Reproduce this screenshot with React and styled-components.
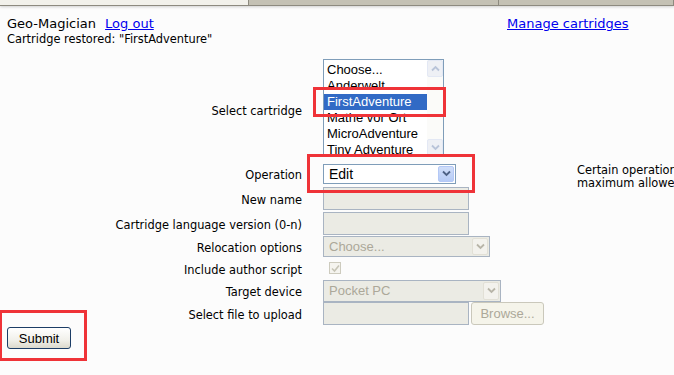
import React from "react";
import styled, { createGlobalStyle } from "styled-components";

const GlobalStyle = createGlobalStyle`
  html, body {
    margin: 0;
    padding: 0;
    background: #fcfcfc;
    overflow: hidden;
  }
  body {
    font-family: "DejaVu Sans", Verdana, sans-serif;
    color: #000;
  }
`;

const cartridges = [
  "Choose...",
  "Anderwelt",
  "FirstAdventure",
  "Mathe vor Ort",
  "MicroAdventure",
  "Tiny Adventure",
];

const Chevron = ({ color, dir = "down" }) => (
  <svg width="9" height="7" viewBox="0 0 9 7">
    <path
      d={dir === "down" ? "M1 1.5 L4.5 5 L8 1.5" : "M1 5.5 L4.5 2 L8 5.5"}
      fill="none"
      stroke={color}
      strokeWidth="1.8"
    />
  </svg>
);

const CheckMark = () => (
  <svg width="9" height="9" viewBox="0 0 9 9">
    <path d="M1 4.5 L3.5 7 L8 1.5" fill="none" stroke="#c6c4b6" strokeWidth="1.6" />
  </svg>
);

const App = () => {
  return (
    <Page>
      <GlobalStyle />
      <TabStrip>
        <Tab $active />
        <Tab $width={249} />
        <Tab />
      </TabStrip>

      <Header>
        <TopLine>
          <span>
            Geo-Magician <HeadLink href="#">Log out</HeadLink>
          </span>
          <HeadLink href="#">Manage cartridges</HeadLink>
        </TopLine>
        <Status>Cartridge restored: "FirstAdventure"</Status>
      </Header>

      <Form>
        <Label>Select cartridge</Label>
        <ListBox>
          <Options>
            {cartridges.map((c) => (
              <Option key={c} $selected={c === "FirstAdventure"}>
                {c}
              </Option>
            ))}
          </Options>
          <ScrollBar>
            <ScrollButton>
              <Chevron color="#b9c4d9" dir="up" />
            </ScrollButton>
            <ScrollButton>
              <Chevron color="#b9c4d9" />
            </ScrollButton>
          </ScrollBar>
        </ListBox>

        <Label>Operation</Label>
        <Select $width={133} $height={20}>
          <SelectText $size={14}>Edit</SelectText>
          <DropButton>
            <Chevron color="#4d6185" />
          </DropButton>
        </Select>
        <Note>
          Certain operations may exceed the
          <br />
          maximum allowed size
        </Note>

        <Label>New name</Label>
        <TextInput $width={146} disabled />

        <Label>Cartridge language version (0-n)</Label>
        <TextInput $width={146} disabled />

        <Label>Relocation options</Label>
        <Select $width={167} $height={21} $disabled>
          <SelectText $disabled>Choose...</SelectText>
          <DropButton $disabled>
            <Chevron color="#b8b5a8" />
          </DropButton>
        </Select>

        <Label>Include author script</Label>
        <CheckBox>
          <CheckMark />
        </CheckBox>

        <Label>Target device</Label>
        <Select $width={178} $height={22} $disabled>
          <SelectText $disabled>Pocket PC</SelectText>
          <DropButton $disabled>
            <Chevron color="#b8b5a8" />
          </DropButton>
        </Select>

        <Label>Select file to upload</Label>
        <FileRow>
          <TextInput $width={146} disabled />
          <Button disabled>Browse...</Button>
        </FileRow>
      </Form>

      <SubmitRow>
        <SubmitButton>Submit</SubmitButton>
      </SubmitRow>

      <Highlight style={{ left: 313, top: 87, width: 133, height: 30 }} />
      <Highlight style={{ left: 307, top: 154, width: 168, height: 39 }} />
      <Highlight style={{ left: -1, top: 310, width: 88, height: 51 }} />
    </Page>
  );
};

export default App;

const Page = styled.div`
  position: relative;
  width: 674px;
  height: 375px;
  overflow: hidden;
`;

const TabStrip = styled.div`
  display: flex;
  height: 5px;
  border-bottom: 1px solid #8d8a7f;
  box-shadow: 0 1px 3px rgba(0, 0, 0, 0.18);
`;

const Tab = styled.div`
  width: ${(p) => (p.$width ? `${p.$width}px` : p.$active ? "248px" : "auto")};
  flex: ${(p) => (p.$width || p.$active ? "none" : "1")};
  background: ${(p) => (p.$active ? "#f2f1eb" : "#c4c1b4")};
  border-right: 1px solid #8d8a7f;
`;

const Header = styled.div`
  padding: 10px 0 0 7px;
`;

const TopLine = styled.div`
  display: grid;
  grid-template-columns: 495px auto;
  font-size: 13px;
  line-height: 15px;
`;

const HeadLink = styled.a`
  color: #0000ee;
  text-decoration: underline;
  margin-left: 5px;
`;

const Status = styled.div`
  margin-top: 1px;
  font-size: 11.4px;
  line-height: 14px;
`;

const Form = styled.div`
  display: grid;
  margin-top: 12px;
  grid-template-columns: 302px 233px auto;
  column-gap: 21px;
  grid-template-rows: 103px 25px 25px 24px 22px 22px 23px 22px;
  align-items: center;
  font-size: 11.4px;
  white-space: nowrap;
`;

const Label = styled.div`
  grid-column: 1;
  justify-self: end;
  padding-top: 3px;
`;

const ListBox = styled.div`
  align-self: start;
  margin-top: 1px;
  width: 121px;
  height: 98px;
  box-sizing: border-box;
  border: 1px solid #7f9db9;
  background: #fff;
  display: flex;
`;

const Options = styled.div`
  flex: 1;
  padding-top: 2px;
  font-family: "Liberation Sans", Arial, sans-serif;
  font-size: 13px;
  line-height: 16px;
  overflow: hidden;
`;

const Option = styled.div`
  padding-left: 3px;
  background: ${(p) => (p.$selected ? "#316ac5" : "transparent")};
  color: ${(p) => (p.$selected ? "#fff" : "#000")};
`;

const ScrollBar = styled.div`
  width: 16px;
  display: flex;
  flex-direction: column;
  justify-content: space-between;
  background: #fbfbf9;
`;

const ScrollButton = styled.div`
  height: 17px;
  box-sizing: border-box;
  border: 1px solid #e3e8f4;
  border-radius: 2px;
  background: #eef0f5;
  display: flex;
  align-items: center;
  justify-content: center;
`;

const Select = styled.div`
  width: ${(p) => p.$width}px;
  height: ${(p) => p.$height}px;
  box-sizing: border-box;
  border: 1px solid ${(p) => (p.$disabled ? "#a9b4c2" : "#7f9db9")};
  background: ${(p) => (p.$disabled ? "#ebebe4" : "#fff")};
  display: flex;
  align-items: center;
  justify-content: space-between;
  padding: 1px;
  font-family: "Liberation Sans", Arial, sans-serif;
`;

const SelectText = styled.span`
  padding-left: 4px;
  font-size: ${(p) => p.$size || 13}px;
  color: ${(p) => (p.$disabled ? "#aca899" : "#000")};
`;

const DropButton = styled.div`
  width: 16px;
  height: 100%;
  box-sizing: border-box;
  border: 1px solid ${(p) => (p.$disabled ? "#e2e0d6" : "#b4c8f6")};
  border-radius: 2px;
  background: ${(p) =>
    p.$disabled
      ? "#f3f2ed"
      : "linear-gradient(#d0def9, #b6cbf6)"};
  display: flex;
  align-items: center;
  justify-content: center;
`;

const Note = styled.div`
  grid-column: 3;
  grid-row: 2 / span 2;
  align-self: start;
  margin-top: 3px;
  line-height: 12.5px;
  font-size: 11.4px;
`;

const TextInput = styled.input`
  width: ${(p) => p.$width}px;
  height: 23px;
  box-sizing: border-box;
  margin: 0;
  border: 1px solid #a9b4c2;
  background: #ebebe4;
`;

const CheckBox = styled.div`
  width: 12px;
  height: 12px;
  margin-left: 6px;
  box-sizing: border-box;
  border: 1px solid #cdcbbe;
  background: #f5f4ef;
  display: flex;
  align-items: center;
  justify-content: center;
`;

const FileRow = styled.div`
  display: flex;
  gap: 2px;
`;

const Button = styled.button`
  width: 73px;
  height: 23px;
  margin: 0;
  padding: 0;
  border: 1px solid #cac8bb;
  border-radius: 3px;
  background: #f5f4ea;
  color: #aca899;
  font-family: "Liberation Sans", Arial, sans-serif;
  font-size: 13px;
`;

const SubmitRow = styled.div`
  padding: 3px 0 0 7px;
`;

const SubmitButton = styled.button`
  width: 64px;
  height: 22px;
  margin: 0;
  padding: 0;
  border: 1px solid #1c3d66;
  border-radius: 3px;
  background: linear-gradient(#ffffff, #f1f0ea 60%, #dcd9cc);
  color: #000;
  font-family: "Liberation Sans", Arial, sans-serif;
  font-size: 13px;
`;

const Highlight = styled.div`
  position: absolute;
  box-sizing: border-box;
  border: 3px solid #ef3338;
  pointer-events: none;
`;
